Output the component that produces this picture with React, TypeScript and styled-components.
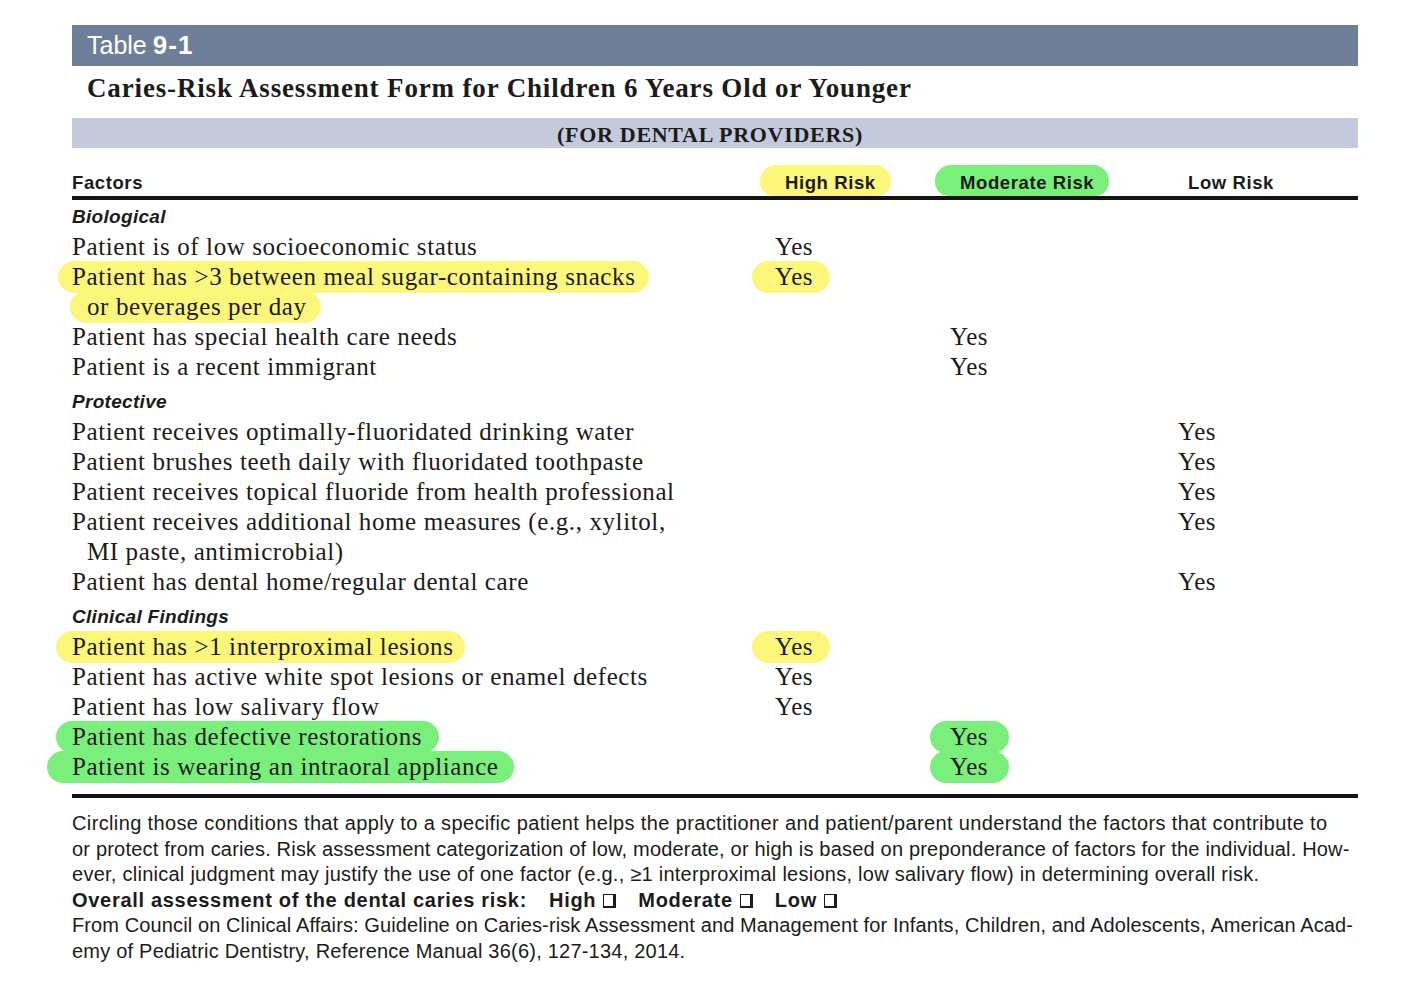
import React from "react";
import styled, { createGlobalStyle } from "styled-components";

const GlobalStyle = createGlobalStyle`
  html, body { margin: 0; padding: 0; background: #ffffff; }
  body { color: #1b1b1b; }
`;

const YELLOW = "#fcf77b";
const GREEN = "#7bef7b";

type Risk = "high" | "moderate" | "low";
type Hl = "yellow" | "green";

const hlColor = (h?: Hl) => (h === "yellow" ? YELLOW : h === "green" ? GREEN : "transparent");

const Page = styled.div`
  width: 1286px;
  margin-left: 72px;
  padding-top: 25px;
  padding-bottom: 30px;
`;

const TitleBar = styled.div`
  height: 41px;
  background: #6f7f9a;
  color: #ffffff;
  display: flex;
  align-items: center;
  padding-left: 15px;
  font-family: "Liberation Sans", Arial, sans-serif;
  font-size: 25px;
`;

const TableNo = styled.b`
  font-weight: 700;
  margin-left: 6px;
  font-size: 26px;
  letter-spacing: 1px;
`;

const Title = styled.h1`
  margin: 0;
  height: 52px;
  box-sizing: border-box;
  padding-bottom: 7px;
  display: flex;
  align-items: center;
  padding-left: 15px;
  font-family: "Liberation Serif", "Times New Roman", serif;
  font-weight: 700;
  font-size: 27px;
  letter-spacing: 0.85px;
  color: #1b1b1b;
`;

const SubBand = styled.div`
  height: 30px;
  box-sizing: border-box;
  padding-top: 3px;
  padding-right: 10px;
  background: #c5c9dc;
  display: flex;
  justify-content: center;
  align-items: center;
  font-family: "Liberation Serif", "Times New Roman", serif;
  font-weight: 700;
  font-size: 22px;
  letter-spacing: 0.7px;
`;

const Grid = styled.div`
  display: grid;
  grid-template-columns: 703px 175px 228px 1fr;
`;

const HeaderRow = styled(Grid)`
  height: 48px;
  align-items: end;
  border-bottom: 4px solid #141414;
`;

const HeaderCell = styled.div<{ $inset?: boolean }>`
  padding-left: ${(p) => (p.$inset ? 10 : 0)}px;
  font-family: "Liberation Sans", Arial, sans-serif;
  font-weight: 700;
  font-size: 18.5px;
  letter-spacing: 0.6px;
`;

const HeaderLabel = styled.span<{ $hl?: Hl }>`
  display: inline-block;
  line-height: 24px;
  padding: 6px 15px 1px 25px;
  margin-left: -25px;
  border-radius: 16px 16px 14px 14px;
  background: ${(p) => hlColor(p.$hl)};
`;

const Body = styled.div`
  font-family: "Liberation Serif", "Times New Roman", serif;
  font-size: 25px;
  letter-spacing: 0.6px;
`;

const Section = styled.div<{ $first?: boolean }>`
  margin-top: ${(p) => (p.$first ? 2 : 5)}px;
  height: 30px;
  line-height: 30px;
  font-family: "Liberation Sans", Arial, sans-serif;
  font-style: italic;
  font-weight: 700;
  font-size: 19px;
  letter-spacing: 0.3px;
`;

const Line = styled.div<{ $indent?: boolean }>`
  height: 30px;
  line-height: 30px;
  white-space: nowrap;
  padding-left: ${(p) => (p.$indent ? 15 : 0)}px;
`;

const Mark = styled.span<{ $hl: Hl; $pl: number; $pr: number }>`
  display: inline-block;
  line-height: 30px;
  padding: 1px ${(p) => p.$pr}px 1px ${(p) => p.$pl}px;
  margin: -1px 0 -1px -${(p) => p.$pl}px;
  border-radius: 17px;
  background: ${(p) => hlColor(p.$hl)};
`;

const Rule = styled.div`
  height: 4px;
  background: #141414;
  margin-top: 12px;
`;

const Footer = styled.div`
  margin-top: 13px;
  font-family: "Liberation Sans", Arial, sans-serif;
  font-size: 20px;
  line-height: 25.5px;
  color: #1b1b1b;
`;

const FootLine = styled.div<{ $bold?: boolean; $ls?: number }>`
  white-space: nowrap;
  font-weight: ${(p) => (p.$bold ? 700 : 400)};
  letter-spacing: ${(p) => p.$ls ?? (p.$bold ? 0.7 : 0.25)}px;
`;

const Choice = styled.span`
  margin-left: 22px;
`;

const Box = styled.span`
  display: inline-block;
  width: 9px;
  height: 11px;
  margin-left: 7px;
  border: 1.5px solid #1b1b1b;
  border-right-width: 3px;
  border-bottom-width: 2.5px;
  vertical-align: -1px;
`;

type LineSpec = { text: string; pl?: number; pr?: number };
type Factor = {
  lines: LineSpec[];
  risk: Risk;
  hlText?: Hl;
  hlYes?: Hl;
};

type Group = { label: string; factors: Factor[] };

const groups: Group[] = [
  {
    label: "Biological",
    factors: [
      { lines: [{ text: "Patient is of low socioeconomic status" }], risk: "high" },
      {
        lines: [
          { text: "Patient has >3 between meal sugar-containing snacks", pl: 14, pr: 13 },
          { text: "or beverages per day", pl: 17, pr: 14 },
        ],
        risk: "high",
        hlText: "yellow",
        hlYes: "yellow",
      },
      { lines: [{ text: "Patient has special health care needs" }], risk: "moderate" },
      { lines: [{ text: "Patient is a recent immigrant" }], risk: "moderate" },
    ],
  },
  {
    label: "Protective",
    factors: [
      { lines: [{ text: "Patient receives optimally-fluoridated drinking water" }], risk: "low" },
      { lines: [{ text: "Patient brushes teeth daily with fluoridated toothpaste" }], risk: "low" },
      { lines: [{ text: "Patient receives topical fluoride from health professional" }], risk: "low" },
      {
        lines: [
          { text: "Patient receives additional home measures (e.g., xylitol," },
          { text: "MI paste, antimicrobial)" },
        ],
        risk: "low",
      },
      { lines: [{ text: "Patient has dental home/regular dental care" }], risk: "low" },
    ],
  },
  {
    label: "Clinical Findings",
    factors: [
      {
        lines: [{ text: "Patient has >1 interproximal lesions", pl: 16, pr: 12 }],
        risk: "high",
        hlText: "yellow",
        hlYes: "yellow",
      },
      { lines: [{ text: "Patient has active white spot lesions or enamel defects" }], risk: "high" },
      { lines: [{ text: "Patient has low salivary flow" }], risk: "high" },
      {
        lines: [{ text: "Patient has defective restorations", pl: 16, pr: 17 }],
        risk: "moderate",
        hlText: "green",
        hlYes: "green",
      },
      {
        lines: [{ text: "Patient is wearing an intraoral appliance", pl: 25, pr: 15 }],
        risk: "moderate",
        hlText: "green",
        hlYes: "green",
      },
    ],
  },
];

const riskCol: Record<Risk, number> = { high: 2, moderate: 3, low: 4 };

const FactorRow: React.FC<{ f: Factor }> = ({ f }) => (
  <Grid>
    <div>
      {f.lines.map((l, i) => (
        <Line key={i} $indent={i > 0}>
          {f.hlText ? (
            <Mark $hl={f.hlText} $pl={l.pl ?? 16} $pr={l.pr ?? 14}>
              {l.text}
            </Mark>
          ) : (
            l.text
          )}
        </Line>
      ))}
    </div>
    <Line style={{ gridColumn: riskCol[f.risk] }}>
      {f.hlYes ? (
        <Mark $hl={f.hlYes} $pl={f.hlYes === "yellow" ? 23 : 20} $pr={f.hlYes === "yellow" ? 17 : 21}>
          Yes
        </Mark>
      ) : (
        "Yes"
      )}
    </Line>
  </Grid>
);

export default function App() {
  return (
    <>
      <GlobalStyle />
      <Page>
        <TitleBar>
          Table<TableNo>9-1</TableNo>
        </TitleBar>
        <Title>Caries-Risk Assessment Form for Children 6 Years Old or Younger</Title>
        <SubBand>(FOR DENTAL PROVIDERS)</SubBand>
        <HeaderRow>
          <HeaderCell>
            <HeaderLabel>Factors</HeaderLabel>
          </HeaderCell>
          <HeaderCell $inset>
            <HeaderLabel $hl="yellow">High Risk</HeaderLabel>
          </HeaderCell>
          <HeaderCell $inset>
            <HeaderLabel $hl="green">Moderate Risk</HeaderLabel>
          </HeaderCell>
          <HeaderCell $inset>
            <HeaderLabel>Low Risk</HeaderLabel>
          </HeaderCell>
        </HeaderRow>
        <Body>
          {groups.map((g, gi) => (
            <React.Fragment key={g.label}>
              <Section $first={gi === 0}>{g.label}</Section>
              {g.factors.map((f, fi) => (
                <FactorRow key={fi} f={f} />
              ))}
            </React.Fragment>
          ))}
        </Body>
        <Rule />
        <Footer>
          <FootLine $ls={0.37}>
            Circling those conditions that apply to a specific patient helps the practitioner and patient/parent understand the factors that contribute to
          </FootLine>
          <FootLine $ls={0.19}>
            or protect from caries. Risk assessment categorization of low, moderate, or high is based on preponderance of factors for the individual. How-
          </FootLine>
          <FootLine $ls={0.26}>
            ever, clinical judgment may justify the use of one factor (e.g., ≥1 interproximal lesions, low salivary flow) in determining overall risk.
          </FootLine>
          <FootLine $bold>
            Overall assessment of the dental caries risk:
            <Choice>
              High<Box />
            </Choice>
            <Choice>
              Moderate<Box />
            </Choice>
            <Choice>
              Low<Box />
            </Choice>
          </FootLine>
          <FootLine $ls={0.11}>
            From Council on Clinical Affairs: Guideline on Caries-risk Assessment and Management for Infants, Children, and Adolescents, American Acad-
          </FootLine>
          <FootLine $ls={0.22}>emy of Pediatric Dentistry, Reference Manual 36(6), 127-134, 2014.</FootLine>
        </Footer>
      </Page>
    </>
  );
}
